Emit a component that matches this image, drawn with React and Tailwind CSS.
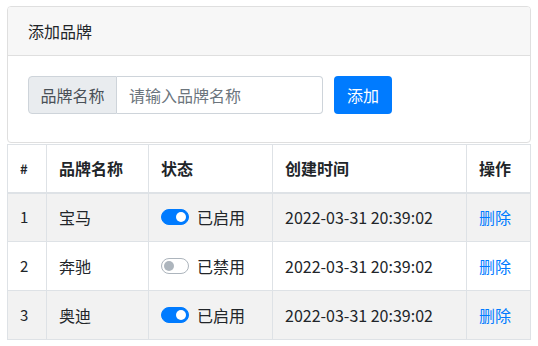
const brands = [
  { id: 1, name: "宝马", enabled: true, created: "2022-03-31 20:39:02" },
  { id: 2, name: "奔驰", enabled: false, created: "2022-03-31 20:39:02" },
  { id: 3, name: "奥迪", enabled: true, created: "2022-03-31 20:39:02" },
];

function Switch({ on }) {
  return (
    <span
      className={
        "relative inline-block w-[28px] h-[16px] rounded-full border " +
        (on ? "bg-[#007bff] border-[#007bff]" : "bg-white border-[#adb5bd]")
      }
    >
      <span
        className={
          "absolute top-[2px] w-[10px] h-[10px] rounded-full " +
          (on ? "left-[14px] bg-white" : "left-[2px] bg-[#adb5bd]")
        }
      />
    </span>
  );
}

export default function App() {
  return (
    <div
      className="w-[538px] h-[346px] bg-white text-[#212529] text-[16px] pt-[6px] px-[7px]"
      style={{ fontFamily: '"Noto Sans CJK SC", "Noto Sans", sans-serif' }}
    >
      {/* card */}
      <div className="border border-[#dfdfdf] rounded-[4px] overflow-hidden">
        <div className="h-[49px] bg-[#f7f7f7] border-b border-[#dfdfdf] px-5 flex items-center">
          添加品牌
        </div>
        <div className="pt-5 pb-7 px-5 flex items-center gap-[11px]">
          <div className="flex h-[38px]">
            <span className="w-[89px] flex items-center justify-center bg-[#e9ecef] border border-[#ced4da] rounded-l-[4px] text-[#495057]">
              品牌名称
            </span>
            <input
              className="w-[206px] border border-l-0 border-[#ced4da] rounded-r-[4px] px-3 outline-none placeholder:text-[#6c757d]"
              placeholder="请输入品牌名称"
            />
          </div>
          <button className="h-[38px] w-[58px] bg-[#007bff] text-white rounded-[4px]">添加</button>
        </div>
      </div>

      {/* table */}
      <table className="table-fixed border-collapse w-[523px] mt-[1px]">
        <colgroup>
          <col className="w-[39px]" />
          <col className="w-[102px]" />
          <col className="w-[124px]" />
          <col className="w-[194px]" />
          <col className="w-[64px]" />
        </colgroup>
        <thead>
          <tr className="h-[48px]">
            <th className="border border-[#dee2e6] border-b-2 px-3 text-left font-bold text-[13px]">#</th>
            <th className="border border-[#dee2e6] border-b-2 px-3 text-left font-bold">品牌名称</th>
            <th className="border border-[#dee2e6] border-b-2 px-3 text-left font-bold">状态</th>
            <th className="border border-[#dee2e6] border-b-2 px-3 text-left font-bold">创建时间</th>
            <th className="border border-[#dee2e6] border-b-2 px-3 text-left font-bold">操作</th>
          </tr>
        </thead>
        <tbody>
          {brands.map((b, i) => (
            <tr key={b.id} className={"h-[49px] " + (i % 2 === 0 ? "bg-[#f2f2f2]" : "bg-white")}>
              <td className="border border-[#dee2e6] px-3 text-[15px]">{b.id}</td>
              <td className="border border-[#dee2e6] px-3">{b.name}</td>
              <td className="border border-[#dee2e6] px-3">
                <div className="flex items-center gap-[8px]">
                  <Switch on={b.enabled} />
                  <span>{b.enabled ? "已启用" : "已禁用"}</span>
                </div>
              </td>
              <td className="border border-[#dee2e6] px-3">{b.created}</td>
              <td className="border border-[#dee2e6] px-3">
                <a className="text-[#007bff]">删除</a>
              </td>
            </tr>
          ))}
        </tbody>
      </table>
    </div>
  );
}
